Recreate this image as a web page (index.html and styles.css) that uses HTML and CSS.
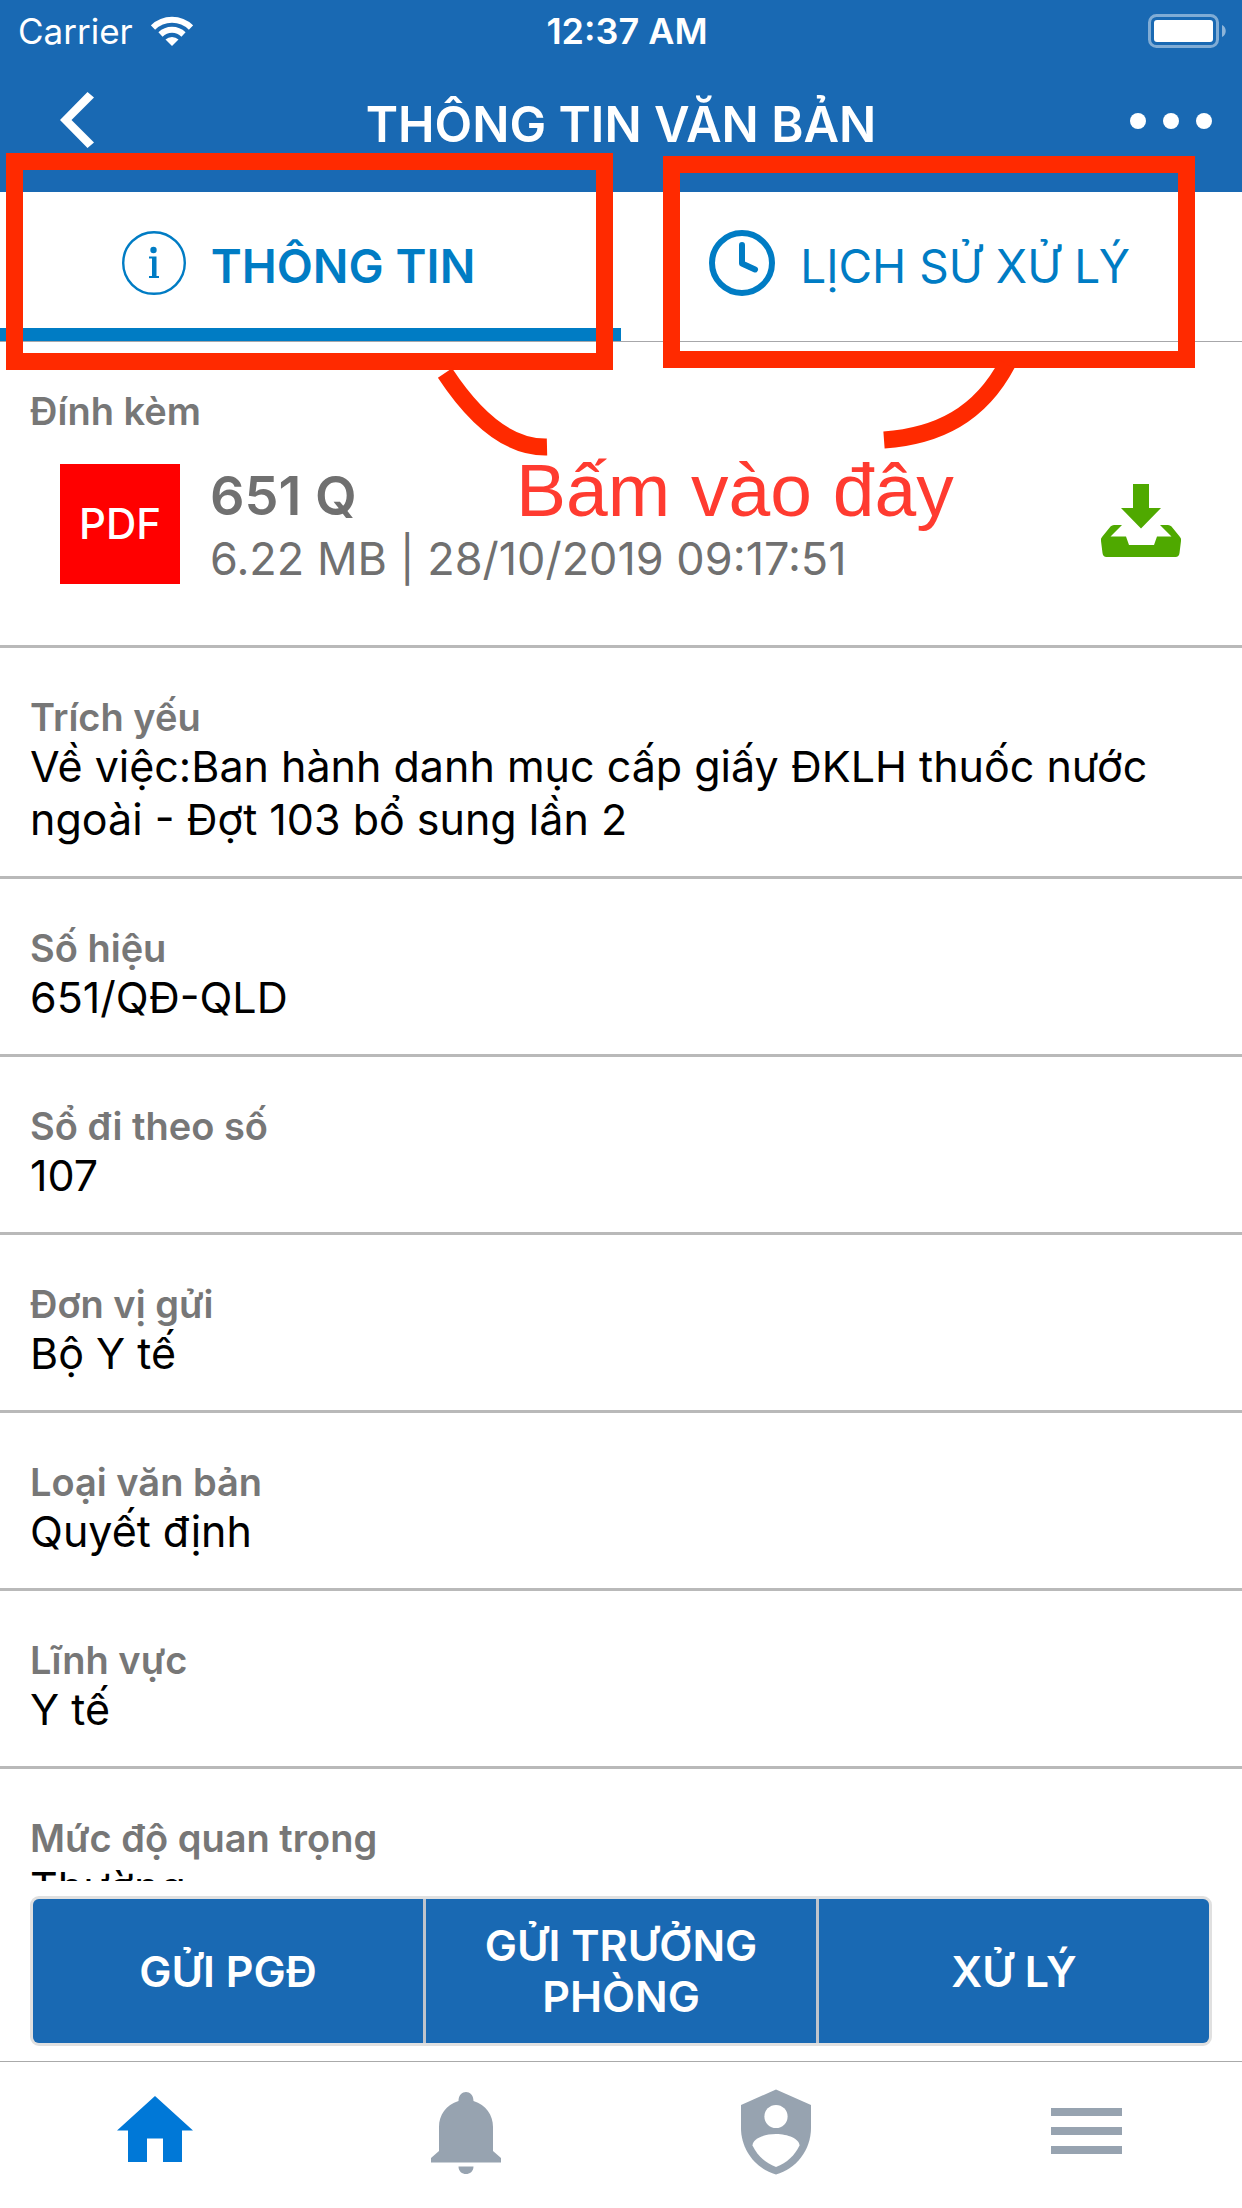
FILE: index.html
```html
<!DOCTYPE html>
<html lang="vi">
<head>
<meta charset="utf-8">
<meta name="viewport" content="width=device-width">
<title>Thông tin văn bản</title>
<link rel="stylesheet" href="styles.css">
</head>
<body>
<div class="app">
  <header class="top">
    <div class="status">
      <div class="carrier">
        <span>Carrier</span>
        <svg width="42" height="30" viewBox="0 0 42 30" fill="none" stroke="#fff" stroke-width="6">
          <path d="M2 11.500a27 27 0 0 1 38 0"/>
          <path d="M9.500 18.500a16.500 16.500 0 0 1 23 0"/>
          <path d="M14.500 23.500a9.500 9.500 0 0 1 13 0L21 30z" fill="#fff" stroke="none"/>
        </svg>
      </div>
      <div class="time">12:37 AM</div>
      <div class="battery">
        <svg width="78" height="34" viewBox="0 0 78 34">
          <rect x="1.500" y="1.500" width="68" height="31" rx="7" fill="none" stroke="#fff" stroke-opacity=".45" stroke-width="3"/>
          <rect x="6" y="6" width="59" height="22" rx="3" fill="#fff"/>
          <path d="M74 11c5 2 5 10 0 12z" fill="#fff" fill-opacity=".5"/>
        </svg>
      </div>
    </div>
    <div class="bar">
      <button class="bar-btn back" type="button" aria-label="Quay lại">
        <svg width="34" height="56" viewBox="0 0 34 56"><path d="M27.500 0L34 5.500 11.500 28 34 50.500 27.500 56 0 28z" fill="#fff"/></svg>
      </button>
      <h1 class="title">THÔNG TIN VĂN BẢN</h1>
      <button class="bar-btn more" type="button" aria-label="Thêm">
        <svg width="82" height="16" viewBox="0 0 82 16" fill="#fff"><circle cx="8" cy="8" r="8"/><circle cx="41" cy="8" r="8"/><circle cx="74" cy="8" r="8"/></svg>
      </button>
    </div>
  </header>

  <nav class="tabs">
    <button class="tab active" type="button">
      <svg width="64" height="64" viewBox="0 0 64 64"><circle cx="32" cy="32" r="30.800" fill="none" stroke="#007cc4" stroke-width="2.400"/><circle cx="31.500" cy="19" r="3.200" fill="#007cc4"/><path d="M27 25.500h7.500v19.500h2.500v2h-10v-2h3v-17.500h-3z" fill="#007cc4"/></svg>
      <span>THÔNG TIN</span>
    </button>
    <button class="tab" type="button">
      <svg width="66" height="66" viewBox="0 0 66 66" fill="none" stroke="#007cc4" stroke-width="6"><circle cx="33" cy="33" r="30"/><path d="M33 15v18.500l13 6" stroke-linecap="round" stroke-linejoin="round"/></svg>
      <span>LỊCH SỬ XỬ LÝ</span>
    </button>
  </nav>

  <main class="content">
    <section class="attach">
      <h2 class="label">Đính kèm</h2>
      <div class="file">
        <div class="pdf">PDF</div>
        <div class="file-text">
          <div class="file-name">651 Q</div>
          <div class="file-meta">6.22 MB | 28/10/2019 09:17:51</div>
        </div>
        <button class="download" type="button" aria-label="Tải xuống">
          <svg width="82" height="73" viewBox="0 0 82 73" fill="#4fa900"><path d="M33 0h16v24h12L41 44.500 21 24h12z"/><path d="M14 41h8L10.500 52.500H26L29 61h25l3-8.500h14.500L60 41h8q2 0 3.500 1.500L80 53q1.500 1.500 1 4l-1.500 12q-.5 4-4 4h-69q-3.500 0-4-4L1 57q-.5-2.500 1-4l8.500-10.500Q12 41 14 41z"/></svg>
        </button>
      </div>
    </section>
    <dl class="fields">
      <div class="field"><dt class="label">Trích yếu</dt><dd>Về việc:Ban hành danh mục cấp giấy ĐKLH thuốc nước ngoài - Đợt 103 bổ sung lần 2</dd></div>
      <div class="field"><dt class="label">Số hiệu</dt><dd>651/QĐ-QLD</dd></div>
      <div class="field"><dt class="label">Sổ đi theo số</dt><dd>107</dd></div>
      <div class="field"><dt class="label">Đơn vị gửi</dt><dd>Bộ Y tế</dd></div>
      <div class="field"><dt class="label">Loại văn bản</dt><dd>Quyết định</dd></div>
      <div class="field"><dt class="label">Lĩnh vực</dt><dd>Y tế</dd></div>
      <div class="field"><dt class="label">Mức độ quan trọng</dt><dd>Thường</dd></div>
    </dl>
  </main>

  <div class="actions">
    <button type="button">GỬI PGĐ</button>
    <button type="button">GỬI TRƯỞNG PHÒNG</button>
    <button type="button">XỬ LÝ</button>
  </div>

  <nav class="dock">
    <a href="#home" aria-label="Trang chủ"><svg width="76" height="86" viewBox="0 0 76 86" fill="#0078d7"><path d="M38 7L76 41.500H65V73H46V49.500H30V73H11V41.500H0z"/></svg></a>
    <a href="#alerts" aria-label="Thông báo"><svg width="70" height="86" viewBox="0 0 70 86" fill="#97a3b0"><path d="M27.500 12c0-12 15-12 15 0C55 16 62 26 62 38v24l8 7v4.500H0V69l8-7V38c0-12 7-22 19.500-26zM27.500 77.500h15c0 10-15 10-15 0z"/></svg></a>
    <a href="#account" aria-label="Tài khoản"><svg width="70" height="86" viewBox="0 0 70 86"><path d="M35 .5L70 16v23c0 22-15 41-35 46.500C15 80 0 61 0 39V16z" fill="#97a3b0"/><circle cx="35" cy="27.500" r="11.600" fill="#fff"/><path d="M35 45c12 0 23.500 5 23.500 11.500C54 66 46 74 35 78 24 74 16 66 11.500 56.500 11.500 50 23 45 35 45z" fill="#fff"/></svg></a>
    <a href="#menu" aria-label="Menu"><svg width="71" height="86" viewBox="0 0 71 86" fill="#97a3b0"><path d="M0 19h71v8H0zM0 38h71v8H0zM0 57h71v8H0z"/></svg></a>
  </nav>

  <div class="notes">
    <div class="box box-info"></div>
    <div class="box box-history"></div>
    <svg class="arms" width="600" height="110" viewBox="430 360 600 110" fill="none" stroke="#ff2a00" stroke-width="17"><path d="M445 373C470 411 505 448 547 447"/><path d="M1007 364C980 415 938 436 884 440"/></svg>
    <div class="note-text">Bấm vào đây</div>
  </div>
</div>
</body>
</html>
```
FILE: styles.css
```css
* { box-sizing: border-box; }

body {
  margin: 0;
  background: #fff;
  color: #000;
  font-family: Inter, "Liberation Sans", sans-serif;
}

button {
  margin: 0;
  padding: 0;
  border: 0;
  background: none;
  color: inherit;
  font: inherit;
  cursor: pointer;
}

svg { display: block; flex: none; }

.app {
  position: relative;
  display: flex;
  flex-direction: column;
  height: 100vh;
  overflow: hidden;
}

/* status bar and title bar */
.top {
  flex: none;
  background: #1969b3;
  color: #fff;
}

.status {
  display: grid;
  grid-template-columns: 1fr auto 1fr;
  align-items: center;
  height: 60px;
  padding: 2px 16px 0 18px;
  font-size: 35px;
  line-height: 58px;
}

.carrier { display: flex; align-items: center; gap: 18px; }
.time { padding-left: 10px; font-size: 36px; font-weight: 600; }
.battery { display: flex; justify-content: flex-end; }

.bar {
  display: grid;
  grid-template-columns: 1fr auto 1fr;
  height: 132px;
  padding: 0 30px 14px;
}

.bar-btn { display: flex; align-items: center; }
.back { padding-left: 30px; }
.more { justify-content: flex-end; padding-top: 2px; }

.title {
  margin: 0;
  padding-top: 10px;
  font-size: 49px;
  font-weight: 600;
  line-height: 110px;
}

/* tabs */
.tabs {
  display: grid;
  grid-template-columns: 1fr 1fr;
  flex: none;
  height: 150px;
  border-bottom: 1px solid #a7a7aa;
}

.tab {
  display: flex;
  align-items: center;
  justify-content: center;
  gap: 25px;
  padding: 6px 24px 0 0;
  border-bottom: 13px solid transparent;
  color: #007cc4;
  font-size: 46px;
}

.tab span { padding-top: 5px; }
.tab.active { border-color: #007cc4; font-size: 47px; font-weight: 600; }

/* document details */
.content {
  flex: 1;
  min-height: 0;
  overflow: hidden;
}

.label {
  margin: 0;
  color: #777;
  font-size: 38px;
  font-weight: 600;
  line-height: 46px;
}

.attach {
  height: 306px;
  padding: 46px 30px 0;
  border-bottom: 3px solid #b9b9b9;
}

.file {
  display: flex;
  align-items: flex-start;
  gap: 30px;
  padding: 30px 30px 0;
}

.pdf {
  flex: none;
  width: 120px;
  background: #f00;
  color: #fff;
  font-size: 42px;
  font-weight: 500;
  line-height: 120px;
  text-align: center;
}

.file-text { flex: 1; color: #707070; }
.file-name { font-size: 54px; font-weight: 600; line-height: 63px; }
.file-meta { font-size: 45px; line-height: 63px; }
.download { margin-top: 20px; }

.fields { margin: 0; }

.field {
  padding: 46px 30px 30px;
  border-bottom: 3px solid #b9b9b9;
}

.field dd {
  margin: 0;
  font-size: 43px;
  line-height: 53px;
}

/* action buttons */
.actions {
  display: grid;
  grid-template-columns: repeat(3, 1fr);
  gap: 3px;
  flex: none;
  height: 150px;
  margin: 15px 30px;
  overflow: hidden;
  border: 3px solid #e0e0e0;
  border-radius: 9px;
  background: #bfc4cc;
}

.actions button {
  padding: 0 40px;
  background: #1969b3;
  color: #fff;
  font-size: 43px;
  font-weight: 600;
  line-height: 51px;
}

/* bottom navigation */
.dock {
  display: grid;
  grid-template-columns: repeat(4, 1fr);
  flex: none;
  height: 147px;
  border-top: 1px solid #aaa;
}

.dock a {
  display: flex;
  align-items: center;
  justify-content: center;
  padding-bottom: 7px;
}

/* callouts above the page */
.notes {
  position: absolute;
  inset: 0;
  pointer-events: none;
}

.box { position: absolute; border: 17px solid #ff2a00; }
.box-info { left: 6px; top: 153px; width: 607px; height: 217px; }
.box-history { left: 663px; top: 156px; width: 532px; height: 212px; }
.arms { position: absolute; left: 430px; top: 360px; }

.note-text {
  position: absolute;
  left: 516px;
  top: 446px;
  color: #ff3b30;
  font-family: "Liberation Sans", sans-serif;
  font-size: 75px;
  line-height: 88px;
  white-space: nowrap;
}
```
